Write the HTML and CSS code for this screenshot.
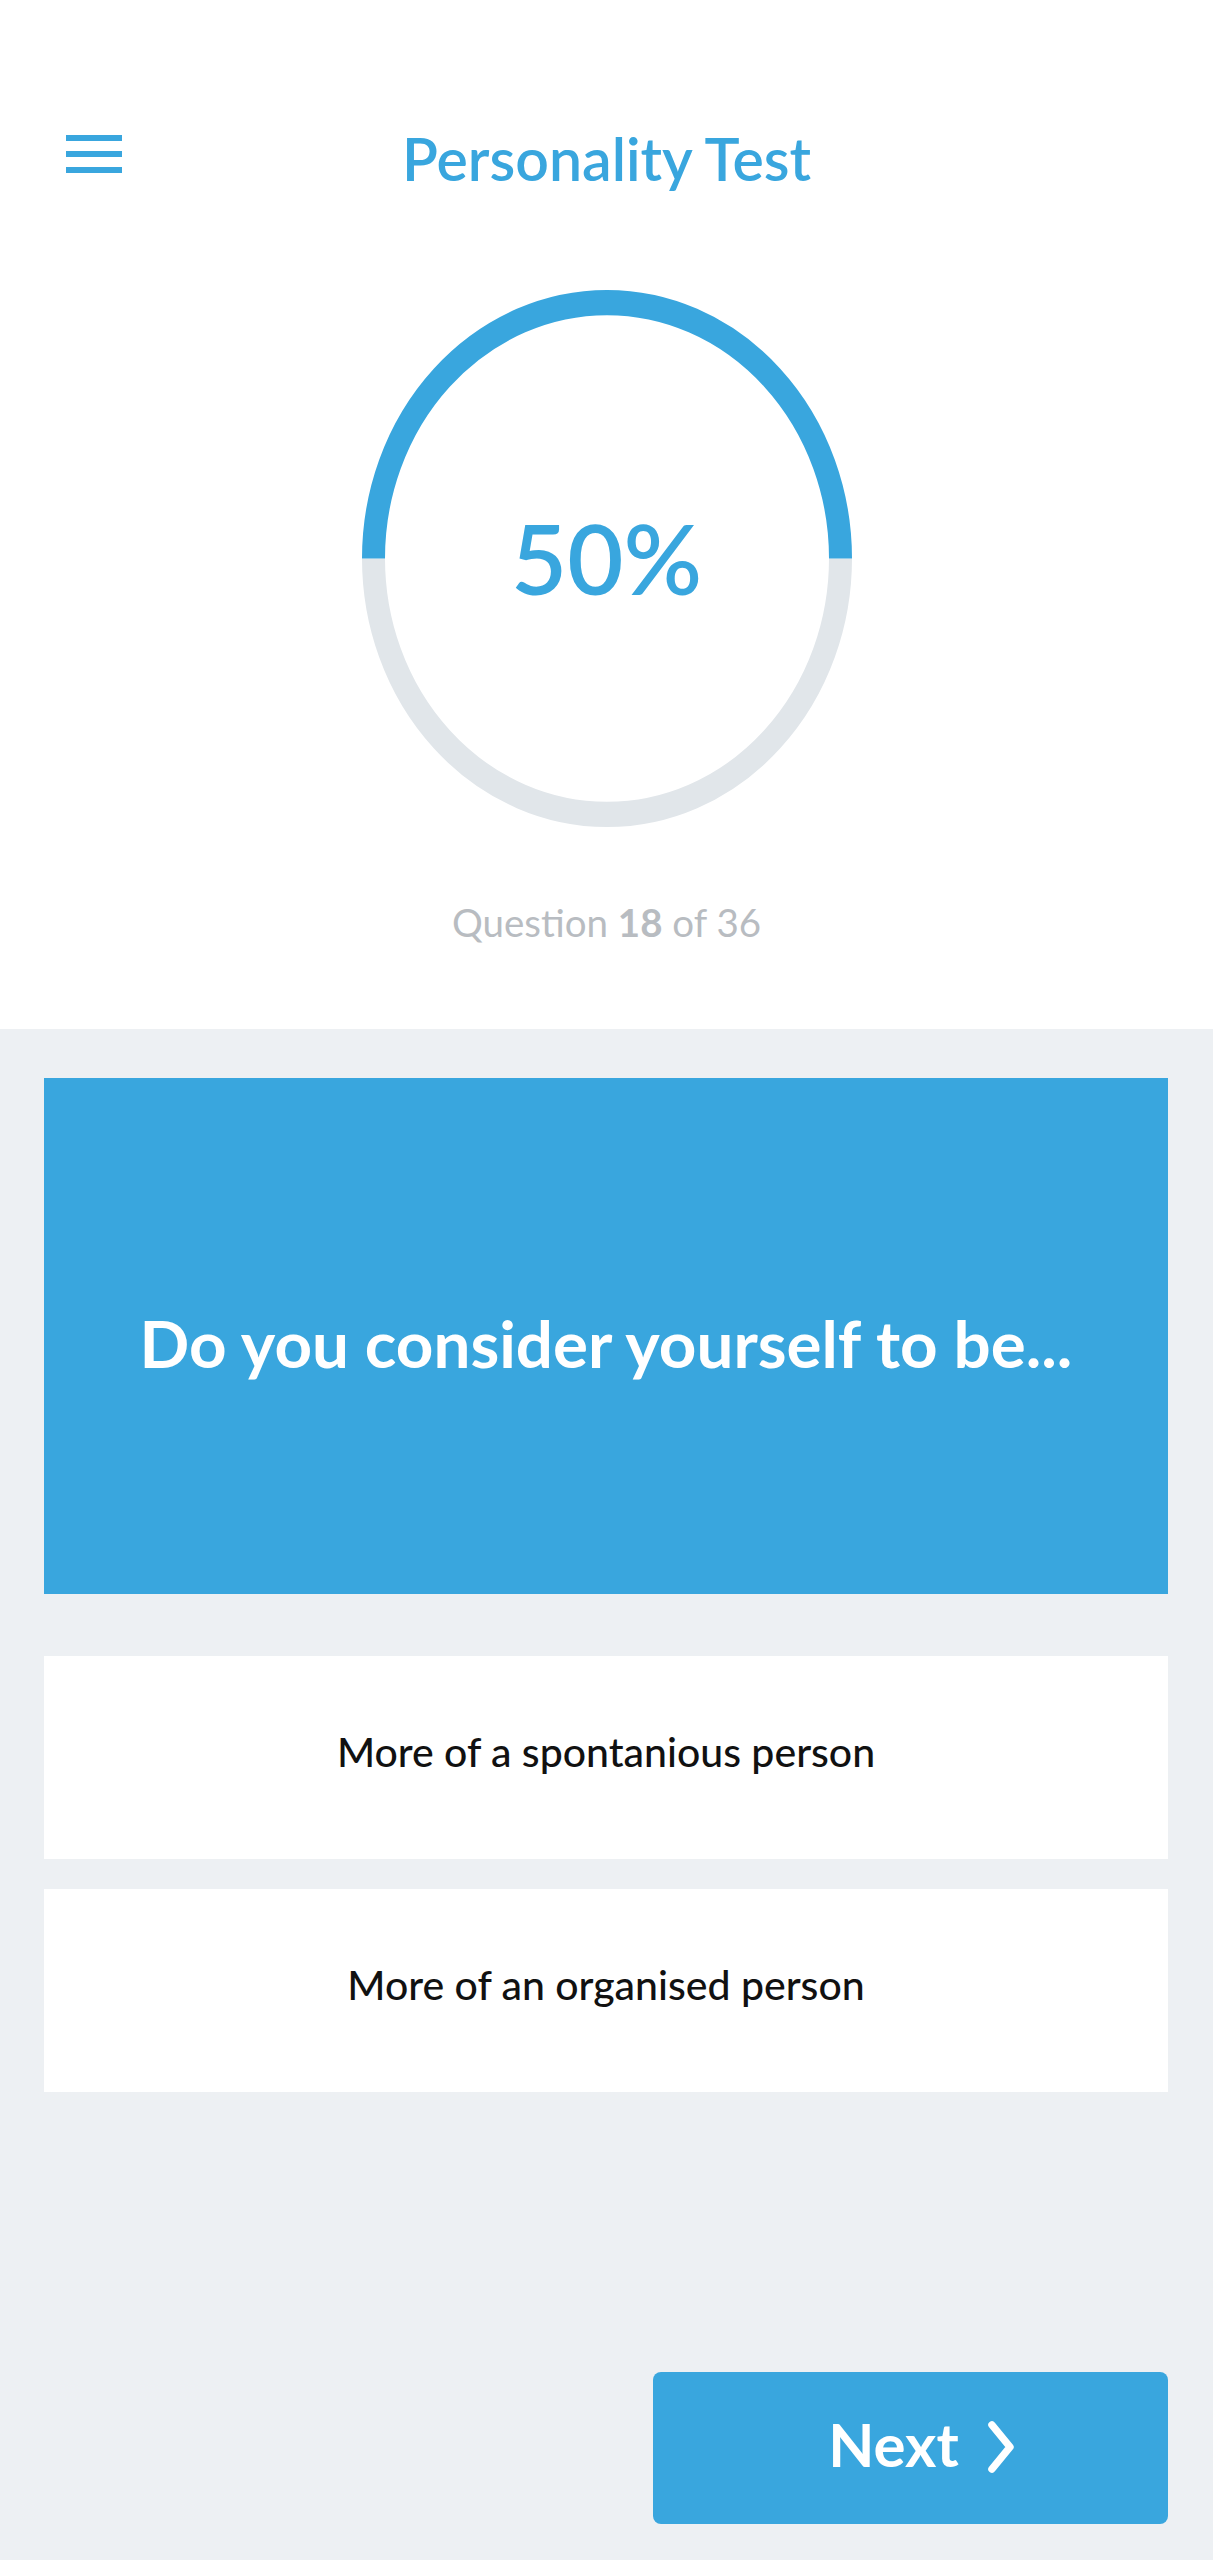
FILE: index.html
```html
<!DOCTYPE html>
<html lang="en">
<head>
<meta charset="utf-8">
<title>Personality Test</title>
<link rel="stylesheet" href="styles.css">
</head>
<body>
<section class="top">
  <header class="header">
    <button class="menu" aria-label="Menu">
      <span class="bar"></span><span class="bar"></span><span class="bar"></span>
    </button>
    <h1 class="title">Personality Test</h1>
    <span class="spacer"></span>
  </header>
  <div class="ring">
    <svg class="ring-svg" width="490" height="537" viewBox="0 0 490 490" preserveAspectRatio="none">
      <path d="M 11.5 245 A 233.5 233.5 0 0 0 478.5 245" fill="none" stroke="#e1e6ea" stroke-width="23"/>
      <path d="M 11.5 245 A 233.5 233.5 0 0 1 478.5 245" fill="none" stroke="#39a6de" stroke-width="23"/>
    </svg>
    <div class="ring-label">50%</div>
  </div>
  <p class="counter">Question <b>18</b> of 36</p>
</section>
<main class="body">
  <div class="question">Do you consider yourself to be...</div>
  <div class="options">
    <div class="option">More of a spontanious person</div>
    <div class="option">More of an organised person</div>
  </div>
  <button class="next">
    <span>Next</span>
    <svg class="chev" width="28" height="54" viewBox="0 0 28 54">
      <polyline points="5,5 23,27 5,49" fill="none" stroke="#ffffff" stroke-width="7.5" stroke-linecap="round" stroke-linejoin="round"/>
    </svg>
  </button>
</main>
</body>
</html>
```
FILE: styles.css
```css
* { box-sizing: border-box; }
html, body { margin: 0; padding: 0; }
body {
  font-family: Lato, "Open Sans", "Liberation Sans", sans-serif;
  background: #edf0f3;
  color: #111;
}
.top {
  background: #ffffff;
  height: 1029px;
  padding-top: 124px;
  display: flex;
  flex-direction: column;
  align-items: center;
}
.header {
  width: 100%;
  height: 71px;
  display: grid;
  grid-template-columns: 1fr auto 1fr;
  align-items: start;
}
.menu {
  justify-self: start;
  margin: 11px 0 0 66px;
  padding: 0;
  border: 0;
  background: none;
  width: 56px;
  display: flex;
  flex-direction: column;
  gap: 10px;
}
.bar {
  display: block;
  width: 56px;
  height: 6px;
  background: #39a6de;
}
.title {
  margin: 0;
  font-size: 59px;
  line-height: 1.2;
  font-weight: 600;
  color: #39a6de;
}
.ring {
  margin-top: 95px;
  display: grid;
  width: 490px;
  height: 537px;
}
.ring-svg, .ring-label { grid-area: 1 / 1; }
.ring-svg { display: block; }
.ring-label {
  align-self: center;
  justify-self: center;
  font-size: 97px;
  line-height: 1.2;
  font-weight: 600;
  color: #39a6de;
}
.counter {
  margin: 72px 0 0;
  font-size: 38.5px;
  line-height: 1.2;
  color: #b8bcc1;
}
.counter b { font-weight: 700; }
.body {
  padding: 49px 45px 36px 44px;
  display: flex;
  flex-direction: column;
}
.question {
  height: 516px;
  background: #39a6de;
  color: #ffffff;
  display: flex;
  align-items: center;
  justify-content: center;
  padding-top: 14px;
  font-size: 65.5px;
  line-height: 1.2;
  font-weight: 700;
}
.options {
  margin-top: 62px;
  display: flex;
  flex-direction: column;
  gap: 30px;
}
.option {
  height: 203px;
  background: #ffffff;
  display: flex;
  align-items: center;
  justify-content: center;
  padding-bottom: 12px;
  font-size: 41px;
  line-height: 1.2;
  font-weight: 500;
  color: #111111;
}
.next {
  align-self: flex-end;
  margin-top: 280px;
  width: 515px;
  height: 152px;
  border: 0;
  border-radius: 8px;
  background: #39a6de;
  color: #ffffff;
  font-family: inherit;
  font-size: 60px;
  line-height: 1.2;
  font-weight: 700;
  display: flex;
  align-items: center;
  justify-content: center;
  gap: 28px;
  padding: 0 0 8px 22px;
}
.chev { display: block; margin-top: 6px; }
```
